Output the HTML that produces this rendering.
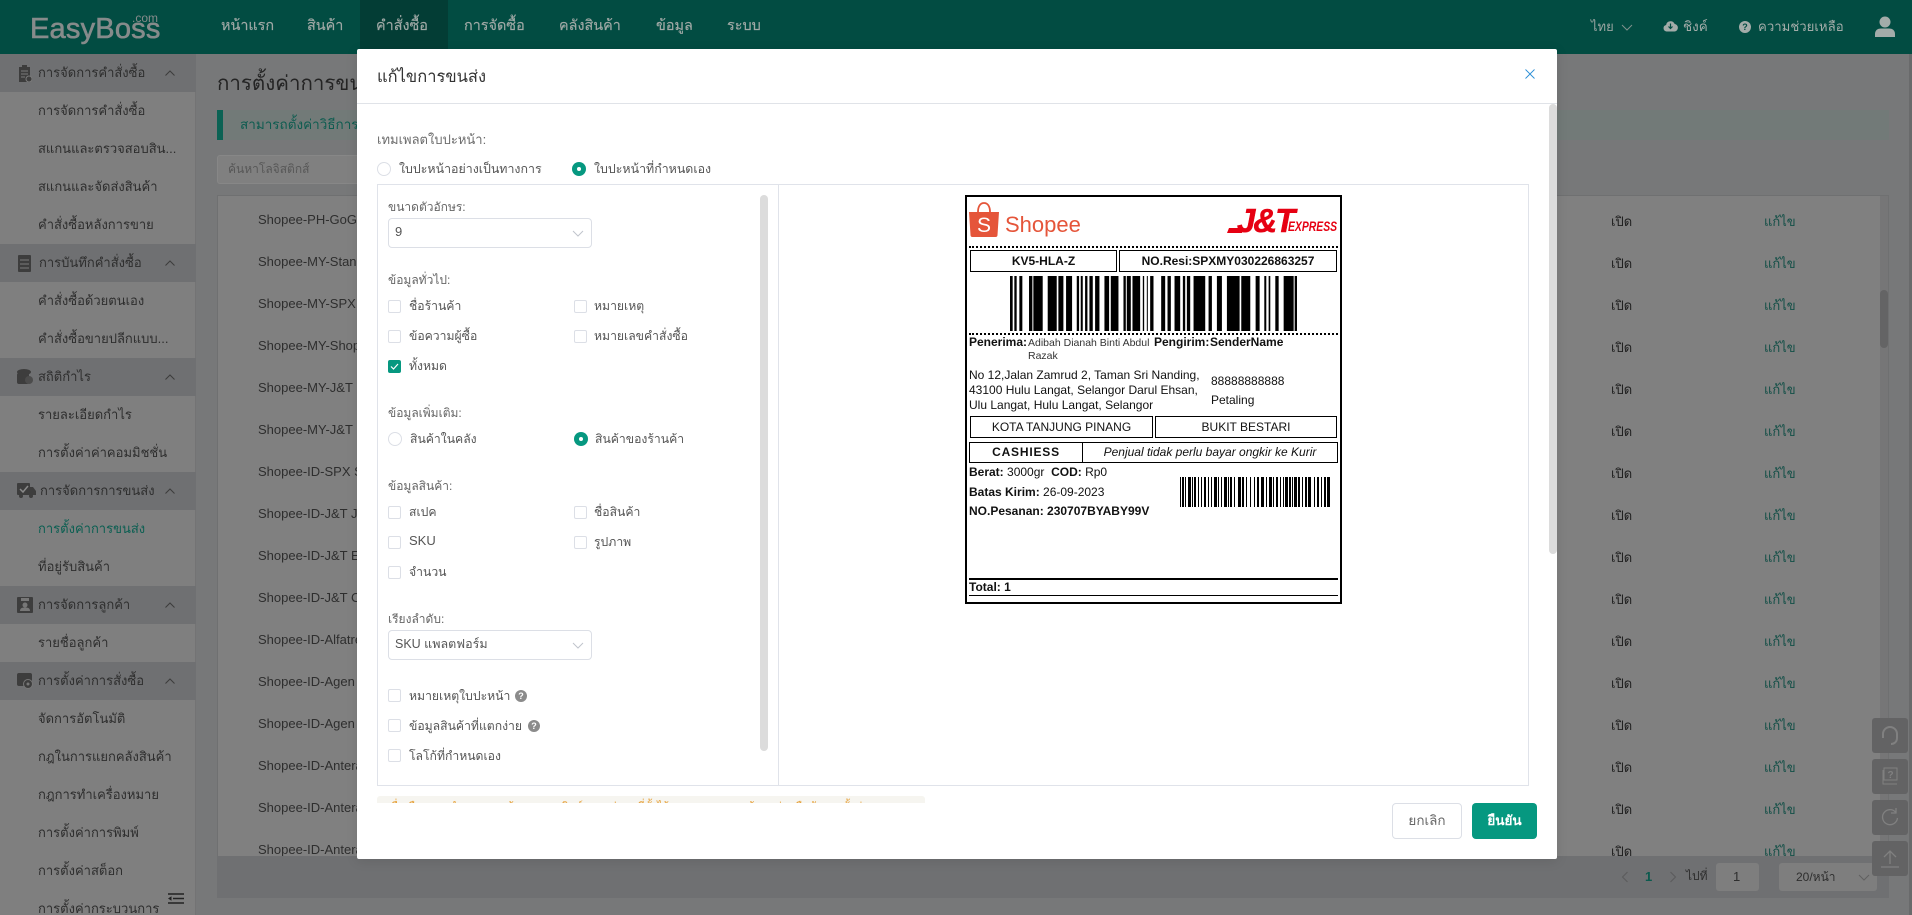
<!DOCTYPE html>
<html lang="th"><head><meta charset="utf-8"><title>EasyBoss</title>
<style>
html,body{margin:0;padding:0;width:1912px;height:915px;overflow:hidden;background:#777879}
body{position:relative;font-family:"Liberation Sans","WenQuanYi Zen Hei","Noto Sans CJK JP",sans-serif;font-size:13px;color:#303030}
div,span,svg{position:absolute;box-sizing:border-box}
.t{white-space:nowrap;line-height:20px;height:20px}
.n{color:#a0a9a6;font-size:14.4px;top:16px;-webkit-text-stroke:.15px #a0a9a6}
.g{left:0;width:196px;height:38px;background:#6f7072}
.s{left:38px;font-size:13px;color:#2e2e2e}
.sh{left:258px;font-size:13px;color:#2e2e2e}
.o{left:1611px;color:#1e1e1e}
.e{left:1764px;color:#134f47}
.l{color:#666;font-size:12px}
.c{color:#555;font-size:12.2px}
.cb{width:13px;height:13px;border:1px solid #dcdfe6;border-radius:2px;background:#fff}
.r{width:14px;height:14px;border:1px solid #dcdfe6;border-radius:50%;background:#fff}
.ra{width:14px;height:14px;border-radius:50%;background:#069880}
.ra:after{content:"";position:absolute;left:5px;top:5px;width:4px;height:4px;background:#fff;border-radius:50%}
.sel{left:388px;width:204px;height:30px;border:1px solid #dcdfe6;border-radius:4px;background:#fff}
.q{width:12px;height:12px;border-radius:50%;background:#8b8b8b;color:#fff;font-size:9px;line-height:12px;text-align:center;font-weight:bold}
.lb{color:#111;font-size:12px;line-height:15px;white-space:nowrap;font-family:"Liberation Sans",sans-serif}
.bx{border:1px solid #000;text-align:center;font-size:12px;line-height:20px;color:#111;white-space:nowrap}
.fb{left:1872px;width:36px;height:35px;background:#636364;border-radius:3px}
</style></head><body>

<!-- header -->
<div style="left:0;top:0;width:1912px;height:54px;background:#024c42"></div>
<div style="left:360px;top:0;width:88px;height:54px;background:#033d35"></div>
<div class="t" style="left:30px;top:12px;height:34px;line-height:34px;font-size:29px;color:#868b8b;letter-spacing:.2px;-webkit-text-stroke:.6px #868b8b">EasyBoss</div>
<div class="t" style="left:132px;top:8px;font-size:12px;color:#868b8b">.com</div>
<div class="t n" style="left:221px">หน้าแรก</div>
<div class="t n" style="left:307px">สินค้า</div>
<div class="t n" style="left:376px">คำสั่งซื้อ</div>
<div class="t n" style="left:464px">การจัดซื้อ</div>
<div class="t n" style="left:559px">คลังสินค้า</div>
<div class="t n" style="left:656px">ข้อมูล</div>
<div class="t n" style="left:727px">ระบบ</div>
<div class="t" style="left:1591px;top:17px;color:#9aa5a2;font-size:13px">ไทย</div>
<svg style="left:1621px;top:24px" width="12" height="8" viewBox="0 0 12 8"><path d="M1 1l5 5 5-5" fill="none" stroke="#7f918c"/></svg>
<svg style="left:1663px;top:20px" width="15" height="12" viewBox="0 0 15 12"><path d="M3.500 11.500a3.300 3.300 0 0 1-.4-6.500A4.500 4.500 0 0 1 11.700 4a3.800 3.800 0 0 1 0 7.500z" fill="#a3aca9"/><path d="M7.500 3.500v5M5.500 6.500l2 2 2-2" fill="none" stroke="#024c42" stroke-width="1.200"/></svg>
<div class="t" style="left:1683px;top:17px;color:#a3aca9;font-size:13.5px">ชิงค์</div>
<div class="q" style="left:1739px;top:21px;background:#a3aca9;color:#024c42">?</div>
<div class="t" style="left:1758px;top:17px;color:#a3aca9;font-size:13.2px">ความช่วยเหลือ</div>
<svg style="left:1875px;top:16px" width="20" height="21" viewBox="0 0 20 21"><circle cx="10" cy="6" r="5.500" fill="#a3aca9"/><path d="M0 21v-3c0-4 3-5.500 6-5.500h8c3 0 6 1.500 6 5.500v3z" fill="#a3aca9"/></svg>

<!-- sidebar -->
<div style="left:0;top:54px;width:196px;height:861px;background:#7f7f7f;border-right:1px solid #737374"></div>
<div class="g" style="top:54px"></div><div class="g" style="top:244px"></div><div class="g" style="top:358px"></div><div class="g" style="top:472px"></div><div class="g" style="top:586px"></div><div class="g" style="top:662px"></div>
<div class="t s" style="top:63px">การจัดการคำสั่งซื้อ</div>
<div class="t s" style="top:101px">การจัดการคำสั่งซื้อ</div>
<div class="t s" style="top:139px">สแกนและตรวจสอบสิน...</div>
<div class="t s" style="top:177px">สแกนและจัดส่งสินค้า</div>
<div class="t s" style="top:215px">คำสั่งซื้อหลังการขาย</div>
<div class="t s" style="top:253px;left:39px">การบันทึกคำสั่งซื้อ</div>
<div class="t s" style="top:291px">คำสั่งซื้อด้วยตนเอง</div>
<div class="t s" style="top:329px">คำสั่งซื้อขายปลีกแบบ...</div>
<div class="t s" style="top:367px">สถิติกำไร</div>
<div class="t s" style="top:405px">รายละเอียดกำไร</div>
<div class="t s" style="top:443px">การตั้งค่าค่าคอมมิชชั่น</div>
<div class="t s" style="top:481px;left:40px">การจัดการการขนส่ง</div>
<div class="t s" style="top:519px;color:#0b5f52">การตั้งค่าการขนส่ง</div>
<div class="t s" style="top:557px">ที่อยู่รับสินค้า</div>
<div class="t s" style="top:595px">การจัดการลูกค้า</div>
<div class="t s" style="top:633px">รายชื่อลูกค้า</div>
<div class="t s" style="top:671px">การตั้งค่าการสั่งซื้อ</div>
<div class="t s" style="top:709px">จัดการอัตโนมัติ</div>
<div class="t s" style="top:747px">กฎในการแยกคลังสินค้า</div>
<div class="t s" style="top:785px">กฎการทำเครื่องหมาย</div>
<div class="t s" style="top:823px">การตั้งค่าการพิมพ์</div>
<div class="t s" style="top:861px">การตั้งค่าสต็อก</div>
<div class="t s" style="top:899px">การตั้งค่ากระบวนการ</div>
<!-- group icons -->
<svg style="left:18px;top:65px" width="14" height="17" viewBox="0 0 14 17"><path d="M1 2h3V0h5v2h3v15H1z" fill="#3d3d3d"/><path d="M3 6h7M3 9h7M3 12h4" stroke="#7a7a7a"/><circle cx="11" cy="14" r="3" fill="#3d3d3d" stroke="#7a7a7a"/></svg>
<svg style="left:17px;top:255px" width="16" height="17" viewBox="0 0 16 17"><rect x="1" width="13" height="17" rx="1" fill="#3d3d3d"/><path d="M3 5h9M3 9h9M3 13h9" stroke="#7a7a7a"/></svg>
<svg style="left:17px;top:369px" width="16" height="16" viewBox="0 0 16 16"><ellipse cx="7" cy="3" rx="7" ry="3" fill="#3d3d3d"/><rect y="4" width="12" height="11" rx="2" fill="#3d3d3d"/><circle cx="12" cy="11" r="4" fill="#4c4c4c"/></svg>
<svg style="left:17px;top:483px" width="19" height="15" viewBox="0 0 19 15"><rect width="13" height="12" rx="1" fill="#3d3d3d"/><path d="M13 4h3l3 4v4h-6z" fill="#3d3d3d"/><circle cx="4" cy="13" r="2" fill="#3d3d3d"/><circle cx="14" cy="13" r="2" fill="#3d3d3d"/><path d="M3 6l3 3 5-6" fill="none" stroke="#8a8a8a" stroke-width="1.500"/></svg>
<svg style="left:17px;top:597px" width="16" height="16" viewBox="0 0 16 16"><rect width="16" height="16" rx="1" fill="#3d3d3d"/><rect x="4" y="1" width="8" height="3" fill="#777"/><circle cx="8" cy="8" r="2.500" fill="#777"/><path d="M3 14c0-3 2-3.500 5-3.500s5 .5 5 3.500z" fill="#777"/></svg>
<svg style="left:17px;top:673px" width="16" height="16" viewBox="0 0 16 16"><rect width="15" height="13" rx="2" fill="#3d3d3d"/><circle cx="11" cy="11" r="4.500" fill="#3d3d3d" stroke="#777"/><circle cx="11" cy="11" r="1.500" fill="#777"/></svg>
<svg style="left:165px;top:70px" width="10" height="6" viewBox="0 0 10 6"><path d="M.5 5.500L5 1l4.500 4.500" fill="none" stroke="#3c3c3c"/></svg>
<svg style="left:165px;top:260px" width="10" height="6" viewBox="0 0 10 6"><path d="M.5 5.500L5 1l4.500 4.500" fill="none" stroke="#3c3c3c"/></svg>
<svg style="left:165px;top:374px" width="10" height="6" viewBox="0 0 10 6"><path d="M.5 5.500L5 1l4.500 4.500" fill="none" stroke="#3c3c3c"/></svg>
<svg style="left:165px;top:488px" width="10" height="6" viewBox="0 0 10 6"><path d="M.5 5.500L5 1l4.500 4.500" fill="none" stroke="#3c3c3c"/></svg>
<svg style="left:165px;top:602px" width="10" height="6" viewBox="0 0 10 6"><path d="M.5 5.500L5 1l4.500 4.500" fill="none" stroke="#3c3c3c"/></svg>
<svg style="left:165px;top:678px" width="10" height="6" viewBox="0 0 10 6"><path d="M.5 5.500L5 1l4.500 4.500" fill="none" stroke="#3c3c3c"/></svg>
<svg style="left:168px;top:893px" width="16" height="11" viewBox="0 0 16 11"><path d="M0 1h16M5 5.500h11M0 10h16" stroke="#222" stroke-width="1.600"/><path d="M0 5.500l3.500-2.200v4.400z" fill="#222"/></svg>

<!-- main -->
<div class="t" style="left:217px;top:71px;height:26px;line-height:26px;font-size:20.5px;color:#242424">การตั้งค่าการขนส่ง</div>
<div style="left:217px;top:110px;width:1672px;height:30px;background:#727a78;border-left:6px solid #0b6254"></div>
<div class="t" style="left:240px;top:115px;color:#0e5c50;font-size:13.5px">สามารถตั้งค่าวิธีการเปิดปิด</div>
<div style="left:217px;top:155px;width:200px;height:29px;background:#808080;border:1px solid #878787;border-radius:3px"></div>
<div class="t" style="left:228px;top:159px;color:#575757;font-size:12px">ค้นหาโลจิสติกส์</div>
<div style="left:217px;top:195px;width:1672px;height:661px;background:#808080;border:1px solid #6f7071;border-bottom:0"></div>
<div style="left:1880px;top:196px;width:8px;height:660px;background:#767677"></div>
<div style="left:1880px;top:290px;width:8px;height:58px;background:#646465;border-radius:4px"></div>
<div class="t sh" style="top:210px">Shopee-PH-GoGo Xpress</div>
<div class="t sh" style="top:252px">Shopee-MY-Standard</div>
<div class="t sh" style="top:294px">Shopee-MY-SPX</div>
<div class="t sh" style="top:336px">Shopee-MY-Shopee</div>
<div class="t sh" style="top:378px">Shopee-MY-J&amp;T</div>
<div class="t sh" style="top:420px">Shopee-MY-J&amp;T</div>
<div class="t sh" style="top:462px">Shopee-ID-SPX Standard</div>
<div class="t sh" style="top:504px">Shopee-ID-J&amp;T Jemari</div>
<div class="t sh" style="top:546px">Shopee-ID-J&amp;T Economy</div>
<div class="t sh" style="top:588px">Shopee-ID-J&amp;T Cargo</div>
<div class="t sh" style="top:630px">Shopee-ID-Alfatrex</div>
<div class="t sh" style="top:672px">Shopee-ID-Agen</div>
<div class="t sh" style="top:714px">Shopee-ID-Agen</div>
<div class="t sh" style="top:756px">Shopee-ID-Anteraja</div>
<div class="t sh" style="top:798px">Shopee-ID-Anteraja</div>
<div class="t sh" style="top:840px">Shopee-ID-Anteraja</div>
<div class="t o" style="top:212px">เปิด</div><div class="t e" style="top:212px">แก้ไข</div>
<div class="t o" style="top:254px">เปิด</div><div class="t e" style="top:254px">แก้ไข</div>
<div class="t o" style="top:296px">เปิด</div><div class="t e" style="top:296px">แก้ไข</div>
<div class="t o" style="top:338px">เปิด</div><div class="t e" style="top:338px">แก้ไข</div>
<div class="t o" style="top:380px">เปิด</div><div class="t e" style="top:380px">แก้ไข</div>
<div class="t o" style="top:422px">เปิด</div><div class="t e" style="top:422px">แก้ไข</div>
<div class="t o" style="top:464px">เปิด</div><div class="t e" style="top:464px">แก้ไข</div>
<div class="t o" style="top:506px">เปิด</div><div class="t e" style="top:506px">แก้ไข</div>
<div class="t o" style="top:548px">เปิด</div><div class="t e" style="top:548px">แก้ไข</div>
<div class="t o" style="top:590px">เปิด</div><div class="t e" style="top:590px">แก้ไข</div>
<div class="t o" style="top:632px">เปิด</div><div class="t e" style="top:632px">แก้ไข</div>
<div class="t o" style="top:674px">เปิด</div><div class="t e" style="top:674px">แก้ไข</div>
<div class="t o" style="top:716px">เปิด</div><div class="t e" style="top:716px">แก้ไข</div>
<div class="t o" style="top:758px">เปิด</div><div class="t e" style="top:758px">แก้ไข</div>
<div class="t o" style="top:800px">เปิด</div><div class="t e" style="top:800px">แก้ไข</div>
<div class="t o" style="top:842px;height:14px;overflow:hidden">เปิด</div><div class="t e" style="top:842px;height:14px;overflow:hidden">แก้ไข</div>
<!-- pagination -->
<div style="left:217px;top:856px;width:1672px;height:42px;background:#6f7072"></div>
<svg style="left:1621px;top:871px" width="8" height="12" viewBox="0 0 8 12"><path d="M6.500 1l-5 5 5 5" fill="none" stroke="#5b5b5c"/></svg>
<div class="t" style="left:1645px;top:867px;font-weight:bold;font-size:13px;color:#0b5a4e">1</div>
<svg style="left:1669px;top:871px" width="8" height="12" viewBox="0 0 8 12"><path d="M1.500 1l5 5-5 5" fill="none" stroke="#5b5b5c"/></svg>
<div class="t" style="left:1686px;top:866px;color:#2e2e2e;font-size:12px">ไปที่</div>
<div style="left:1716px;top:863px;width:43px;height:28px;background:#7e7e7e;border-radius:3px"></div>
<div class="t" style="left:1733px;top:867px;color:#2e2e2e;font-size:13px">1</div>
<div style="left:1779px;top:863px;width:98px;height:28px;background:#7e7e7e;border-radius:3px"></div>
<div class="t" style="left:1796px;top:867px;color:#2e2e2e;font-size:12px">20/หน้า</div>
<svg style="left:1858px;top:874px" width="12" height="8" viewBox="0 0 12 8"><path d="M1 1l5 5 5-5" fill="none" stroke="#606060"/></svg>
<div style="left:1909px;top:54px;width:3px;height:861px;background:#696a6b"></div>

<!-- float buttons -->
<div class="fb" style="top:718px"></div><div class="fb" style="top:759px"></div><div class="fb" style="top:800px"></div><div class="fb" style="top:841px"></div>
<svg style="left:1880px;top:725px" width="20" height="22" viewBox="0 0 20 22"><path d="M3 13V9a7 7 0 0 1 14 0v4M17 13c0 4-3 6-6 6" fill="none" stroke="#808080" stroke-width="2"/></svg>
<svg style="left:1881px;top:767px" width="18" height="19" viewBox="0 0 18 19"><path d="M3 1h13v12H3zM2 14v3h14M2 14V3" fill="none" stroke="#808080"/><text x="9.500" y="11" font-size="10" font-weight="bold" text-anchor="middle" fill="#808080" font-family="Liberation Sans">?</text></svg>
<svg style="left:1880px;top:807px" width="20" height="20" viewBox="0 0 20 20"><path d="M15.500 5a7.500 7.500 0 1 0 2 6M16 1v5h-5" fill="none" stroke="#808080" stroke-width="1.300"/></svg>
<svg style="left:1880px;top:849px" width="20" height="19" viewBox="0 0 20 19"><path d="M10 15V2M4 8l6-6 6 6M1 18h18" fill="none" stroke="#808080" stroke-width="1.300"/></svg>

<!-- modal -->
<div style="left:357px;top:49px;width:1200px;height:810px;background:#fff;border-radius:2px;box-shadow:0 2px 12px rgba(0,0,0,.1)"></div>
<div class="t" style="left:377px;top:65px;height:24px;line-height:24px;font-size:16.5px;color:#333">แก้ไขการขนส่ง</div>
<svg style="left:1525px;top:69px" width="10" height="10" viewBox="0 0 10 10"><path d="M.5.500l9 9M9.500.500l-9 9" stroke="#2b8fd6" stroke-width=".9"/></svg>
<div style="left:357px;top:103px;width:1200px;height:1px;background:#e0e3e8"></div>
<div style="left:1549px;top:104px;width:8px;height:450px;background:#dcdcdc;border-radius:4px"></div>

<div class="t l" style="left:377px;top:130px;color:#6d6d6d;font-size:13px">เทมเพลตใบปะหน้า:</div>
<div class="r" style="left:377px;top:162px"></div>
<div class="t c" style="left:399px;top:159px;font-size:12.4px">ใบปะหน้าอย่างเป็นทางการ</div>
<div class="ra" style="left:572px;top:162px"></div>
<div class="t c" style="left:594px;top:159px;font-size:12.4px">ใบปะหน้าที่กำหนดเอง</div>

<div style="left:377px;top:184px;width:1152px;height:602px;border:1px solid #e0e3ea;background:#fff"></div>
<div style="left:778px;top:185px;width:1px;height:600px;background:#e0e3ea"></div>
<div style="left:760px;top:195px;width:8px;height:556px;background:#dcdcdc;border-radius:4px"></div>

<div class="t l" style="left:388px;top:197px">ขนาดตัวอักษร:</div>
<div class="sel" style="top:218px"></div>
<div class="t" style="left:395px;top:222px;font-size:13px;color:#555">9</div>
<svg style="left:572px;top:230px" width="12" height="7" viewBox="0 0 12 7"><path d="M1 1l5 5 5-5" fill="none" stroke="#c0c4cc"/></svg>

<div class="t l" style="left:388px;top:270px">ข้อมูลทั่วไป:</div>
<div class="cb" style="left:388px;top:300px"></div><div class="t c" style="left:409px;top:296px">ชื่อร้านค้า</div>
<div class="cb" style="left:574px;top:300px"></div><div class="t c" style="left:594px;top:296px">หมายเหตุ</div>
<div class="cb" style="left:388px;top:330px"></div><div class="t c" style="left:409px;top:326px">ข้อความผู้ซื้อ</div>
<div class="cb" style="left:574px;top:330px"></div><div class="t c" style="left:594px;top:326px">หมายเลขคำสั่งซื้อ</div>
<div class="cb" style="left:388px;top:360px;background:#069880;border-color:#069880"></div>
<svg style="left:390px;top:362px" width="9" height="9" viewBox="0 0 9 9"><path d="M1 4.500l2.500 2.500L8 2" fill="none" stroke="#fff" stroke-width="1.200"/></svg>
<div class="t c" style="left:409px;top:356px">ทั้งหมด</div>

<div class="t l" style="left:388px;top:403px">ข้อมูลเพิ่มเติม:</div>
<div class="r" style="left:388px;top:432px"></div><div class="t c" style="left:410px;top:429px">สินค้าในคลัง</div>
<div class="ra" style="left:574px;top:432px"></div><div class="t c" style="left:595px;top:429px">สินค้าของร้านค้า</div>

<div class="t l" style="left:388px;top:476px">ข้อมูลสินค้า:</div>
<div class="cb" style="left:388px;top:506px"></div><div class="t c" style="left:409px;top:502px">สเปค</div>
<div class="cb" style="left:574px;top:506px"></div><div class="t c" style="left:594px;top:502px">ชื่อสินค้า</div>
<div class="cb" style="left:388px;top:536px"></div><div class="t c" style="left:409px;top:531px;font-size:13px">SKU</div>
<div class="cb" style="left:574px;top:536px"></div><div class="t c" style="left:594px;top:532px">รูปภาพ</div>
<div class="cb" style="left:388px;top:566px"></div><div class="t c" style="left:409px;top:562px">จำนวน</div>

<div class="t l" style="left:388px;top:609px">เรียงลำดับ:</div>
<div class="sel" style="top:630px"></div>
<div class="t" style="left:395px;top:634px;font-size:12.5px;color:#555">SKU แพลตฟอร์ม</div>
<svg style="left:572px;top:642px" width="12" height="7" viewBox="0 0 12 7"><path d="M1 1l5 5 5-5" fill="none" stroke="#c0c4cc"/></svg>

<div class="cb" style="left:388px;top:689px"></div><div class="t c" style="left:409px;top:686px">หมายเหตุใบปะหน้า</div><div class="q" style="left:515px;top:690px">?</div>
<div class="cb" style="left:388px;top:719px"></div><div class="t c" style="left:409px;top:716px">ข้อมูลสินค้าที่แตกง่าย</div><div class="q" style="left:528px;top:720px">?</div>
<div class="cb" style="left:388px;top:749px"></div><div class="t c" style="left:409px;top:746px">โลโก้ที่กำหนดเอง</div>

<div style="left:377px;top:796px;width:548px;height:7px;background:#f6f5f0;border-radius:3px 3px 0 0;overflow:hidden"><div class="t" style="left:10px;top:1px;font-size:11px;color:#e6a23c">เมื่อเลือกแบบกำหนดเองแล้ว ระบบจะพิมพ์ตามรูปแบบที่ตั้งไว้ กรุณาตรวจสอบข้อมูลก่อนยืนยันการตั้งค่า</div></div>

<div style="left:1392px;top:803px;width:70px;height:36px;border:1px solid #dcdfe6;border-radius:4px;background:#fff;color:#666;text-align:center;line-height:34px;font-size:13.5px">ยกเลิก</div>
<div style="left:1472px;top:803px;width:65px;height:36px;border-radius:4px;background:#069880;color:#fff;text-align:center;line-height:36px;font-size:13.5px;font-weight:bold">ยืนยัน</div>

<!-- label -->
<div style="left:965px;top:195px;width:377px;height:409px;border:2px solid #000;background:#fff"></div>
<svg style="left:969px;top:202px" width="30" height="35" viewBox="0 0 30 35"><path d="M0 10h30l-1.500 23a2 2 0 0 1-2 2H3.500a2 2 0 0 1-2-2z" fill="#e5553a"/><path d="M9 10c0-6 2.500-9 6-9s6 3 6 9" fill="none" stroke="#e5553a" stroke-width="1.800"/><text x="15" y="30" text-anchor="middle" font-size="21" fill="#fff" font-family="Liberation Sans">S</text></svg>
<div class="t" style="left:1005px;top:211px;height:28px;line-height:28px;font-size:22px;color:#e5553a;font-family:'Liberation Sans',sans-serif">Shopee</div>
<svg style="left:1227px;top:228px" width="16" height="5" viewBox="0 0 16 5"><path d="M2 0h14l-1 5H0z" fill="#e60012"/></svg>
<div class="t" style="left:1237px;top:204px;height:34px;line-height:34px;font-size:33px;font-weight:bold;font-style:italic;color:#e60012;letter-spacing:-2px;-webkit-text-stroke:.5px #e60012;font-family:'Liberation Sans',sans-serif">J&amp;T</div>
<div class="t" style="left:1288px;top:219px;height:16px;line-height:16px;font-size:13.5px;font-weight:bold;font-style:italic;color:#e60012;transform:scaleX(.77);transform-origin:0 0;font-family:'Liberation Sans',sans-serif">EXPRESS</div>
<div style="left:969px;top:246px;width:369px;height:0;border-top:2px dotted #000"></div>
<div class="bx" style="left:970px;top:250px;width:147px;height:22px;font-weight:bold">KV5-HLA-Z</div>
<div class="bx" style="left:1119px;top:250px;width:218px;height:22px;font-weight:bold">NO.Resi:SPXMY030226863257</div>
<svg style="left:1010px;top:276px" width="287" height="55" viewBox="150 0 860 55" preserveAspectRatio="none"><g fill="#000"><rect x="150" width="8" height="55"/><rect x="163" width="7" height="55"/><rect x="178" width="9" height="55"/><rect x="207" width="10" height="55"/><rect x="220" width="28" height="55"/><rect x="263" width="27" height="55"/><rect x="295" width="15" height="55"/><rect x="318" width="18" height="55"/><rect x="350" width="7" height="55"/><rect x="362" width="6" height="55"/><rect x="375" width="7" height="55"/><rect x="388" width="10" height="55"/><rect x="405" width="13" height="55"/><rect x="433" width="14" height="55"/><rect x="452" width="23" height="55"/><rect x="490" width="7" height="55"/><rect x="500" width="12" height="55"/><rect x="517" width="23" height="55"/><rect x="548" width="4" height="55"/><rect x="560" width="3" height="55"/><rect x="570" width="10" height="55"/><rect x="603" width="12" height="55"/><rect x="622" width="10" height="55"/><rect x="643" width="17" height="55"/><rect x="668" width="7" height="55"/><rect x="680" width="10" height="55"/><rect x="700" width="35" height="55"/><rect x="745" width="10" height="55"/><rect x="770" width="15" height="55"/><rect x="800" width="38" height="55"/><rect x="843" width="27" height="55"/><rect x="886" width="12" height="55"/><rect x="912" width="6" height="55"/><rect x="925" width="5" height="55"/><rect x="945" width="10" height="55"/><rect x="970" width="30" height="55"/><rect x="1003" width="7" height="55"/></g></svg>
<div style="left:969px;top:333px;width:369px;height:0;border-top:2px dotted #000"></div>
<div class="lb" style="left:969px;top:335px;font-weight:bold">Penerima:</div>
<div class="lb" style="left:1028px;top:336px;font-size:10.5px;color:#333">Adibah Dianah Binti Abdul</div>
<div class="lb" style="left:1028px;top:349px;font-size:10.5px;color:#333">Razak</div>
<div class="lb" style="left:1154px;top:335px;font-weight:bold">Pengirim:</div>
<div class="lb" style="left:1210px;top:335px;font-weight:bold">SenderName</div>
<div class="lb" style="left:969px;top:368px">No 12,Jalan Zamrud 2, Taman Sri Nanding,</div>
<div class="lb" style="left:969px;top:383px">43100 Hulu Langat, Selangor Darul Ehsan,</div>
<div class="lb" style="left:969px;top:398px">Ulu Langat, Hulu Langat, Selangor</div>
<div class="lb" style="left:1211px;top:374px">88888888888</div>
<div class="lb" style="left:1211px;top:393px">Petaling</div>
<div class="bx" style="left:970px;top:416px;width:183px;height:22px">KOTA TANJUNG PINANG</div>
<div class="bx" style="left:1155px;top:416px;width:182px;height:22px">BUKIT BESTARI</div>
<div class="bx" style="left:969px;top:442px;width:114px;height:21px;font-weight:bold;letter-spacing:.8px;line-height:19px">CASHIESS</div>
<div class="bx" style="left:1082px;top:442px;width:256px;height:21px;font-style:italic;line-height:19px">Penjual tidak perlu bayar ongkir ke Kurir</div>
<div class="lb" style="left:969px;top:465px"><b>Berat:</b> 3000gr&nbsp;&nbsp;<b>COD:</b> Rp0</div>
<div class="lb" style="left:969px;top:485px"><b>Batas Kirim:</b> 26-09-2023</div>
<div class="lb" style="left:969px;top:504px;font-weight:bold">NO.Pesanan: 230707BYABY99V</div>
<svg style="left:1180px;top:477px" width="150" height="30" viewBox="0 0 150 30" preserveAspectRatio="none"><g fill="#000"><rect x="0" width="1" height="30"/><rect x="2" width="2" height="30"/><rect x="5" width="1" height="30"/><rect x="8" width="3" height="30"/><rect x="12" width="1" height="30"/><rect x="14" width="2" height="30"/><rect x="18" width="1" height="30"/><rect x="21" width="1" height="30"/><rect x="24" width="2" height="30"/><rect x="28" width="1" height="30"/><rect x="31" width="1" height="30"/><rect x="34" width="3" height="30"/><rect x="38" width="1" height="30"/><rect x="41" width="1" height="30"/><rect x="44" width="3" height="30"/><rect x="48" width="1" height="30"/><rect x="50" width="2" height="30"/><rect x="54" width="1" height="30"/><rect x="58" width="3" height="30"/><rect x="62" width="2" height="30"/><rect x="66" width="1" height="30"/><rect x="70" width="1" height="30"/><rect x="74" width="1" height="30"/><rect x="77" width="2" height="30"/><rect x="81" width="3" height="30"/><rect x="86" width="1" height="30"/><rect x="89" width="3" height="30"/><rect x="93" width="1" height="30"/><rect x="96" width="2" height="30"/><rect x="100" width="1" height="30"/><rect x="103" width="1" height="30"/><rect x="105" width="3" height="30"/><rect x="109" width="2" height="30"/><rect x="112" width="1" height="30"/><rect x="114" width="3" height="30"/><rect x="118" width="2" height="30"/><rect x="122" width="1" height="30"/><rect x="125" width="2" height="30"/><rect x="128" width="3" height="30"/><rect x="134" width="1" height="30"/><rect x="137" width="2" height="30"/><rect x="141" width="1" height="30"/><rect x="144" width="2" height="30"/><rect x="147" width="3" height="30"/></g></svg>
<div style="left:969px;top:578px;width:369px;height:2px;background:#000"></div>
<div class="lb" style="left:969px;top:579px;font-weight:bold;line-height:16px;font-size:12px">Total: 1</div>
<div style="left:969px;top:595px;width:369px;height:1px;background:#000"></div>

</body></html>
